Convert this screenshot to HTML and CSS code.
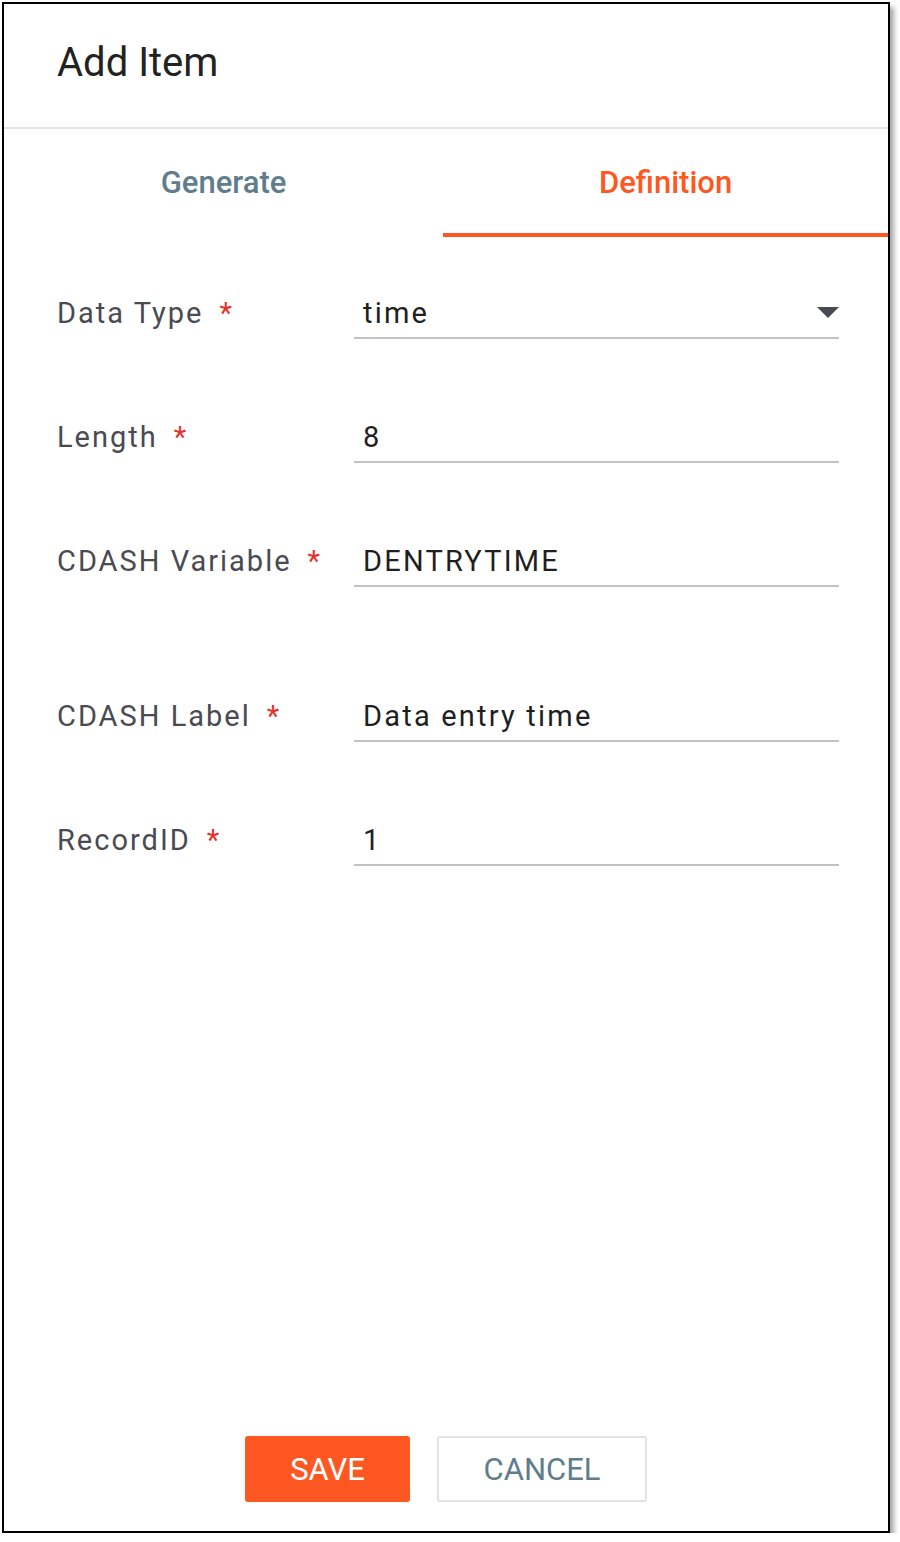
FILE: index.html
```html
<!DOCTYPE html>
<html lang="en">
<head>
<meta charset="utf-8">
<title>Add Item</title>
<link rel="stylesheet" href="styles.css">
</head>
<body>
<div class="panel">
  <header class="panel-header">
    <h1 class="panel-title">Add Item</h1>
  </header>
  <nav class="tabs">
    <div class="tab">Generate</div>
    <div class="tab tab-active">Definition</div>
  </nav>
  <form class="form">
    <div class="field">
      <label class="field-label">Data Type<span class="req">*</span></label>
      <div class="field-input field-select">
        <span class="field-value">time</span>
        <svg class="caret" width="22" height="11" viewBox="0 0 22 11"><path d="M0 0 L22 0 L11 11 Z" fill="#4a4a52"/></svg>
      </div>
    </div>
    <div class="field">
      <label class="field-label">Length<span class="req">*</span></label>
      <div class="field-input"><span class="field-value">8</span></div>
    </div>
    <div class="field field-spaced">
      <label class="field-label">CDASH Variable<span class="req">*</span></label>
      <div class="field-input"><span class="field-value">DENTRYTIME</span></div>
    </div>
    <div class="field">
      <label class="field-label">CDASH Label<span class="req">*</span></label>
      <div class="field-input"><span class="field-value">Data entry time</span></div>
    </div>
    <div class="field">
      <label class="field-label">RecordID<span class="req">*</span></label>
      <div class="field-input"><span class="field-value">1</span></div>
    </div>
  </form>
  <footer class="actions">
    <button class="btn btn-primary" type="button">SAVE</button>
    <button class="btn btn-secondary" type="button">CANCEL</button>
  </footer>
</div>
</body>
</html>
```

FILE: styles.css
```css
html, body {
  margin: 0;
  padding: 0;
  background: #ffffff;
}

body {
  font-family: Roboto, "Liberation Sans", Arial, sans-serif;
}

.panel {
  box-sizing: border-box;
  width: 888px;
  height: 1531px;
  margin: 2px 0 0 2px;
  border: 2px solid #000000;
  background: #ffffff;
  box-shadow: 4px 5px 5px rgba(0, 0, 0, 0.35);
  display: flex;
  flex-direction: column;
}

.panel-header {
  box-sizing: border-box;
  height: 125px;
  border-bottom: 2px solid #e2e2e2;
  padding: 0 0 6px 53px;
  display: flex;
  align-items: center;
}

.panel-title {
  margin: 0;
  font-size: 40px;
  font-weight: 400;
  color: #222222;
  line-height: 48px;
}

.tabs {
  display: flex;
  height: 108px;
}

.tab {
  flex: 1;
  display: flex;
  align-items: center;
  justify-content: center;
  font-size: 31px;
  font-weight: 500;
  color: #5f7d8c;
  border-bottom: 4px solid transparent;
  box-sizing: border-box;
  padding-top: 2px;
}

.tab-active {
  color: #ff5722;
  border-bottom-color: #ff5722;
  flex-basis: 0;
  flex-grow: 1.013;
}

.form {
  flex: 1;
  padding: 56px 49px 0 53px;
  display: flex;
  flex-direction: column;
  gap: 78px;
}

.field {
  display: flex;
  align-items: flex-end;
}

.field-spaced {
  margin-bottom: 31px;
}

.field-label {
  width: 297px;
  flex: none;
  font-size: 29px;
  line-height: 40px;
  padding-bottom: 6px;
  color: #4a4a52;
  letter-spacing: 2px;
}

.req {
  color: #e8302a;
  margin-left: 16px;
}

.field-input {
  flex: 1;
  display: flex;
  height: 44px;
  padding: 0 0 0 9px;
  border-bottom: 2px solid #c2c2c2;
  align-items: flex-end;
}

.field-value {
  font-size: 29px;
  line-height: 40px;
  padding-bottom: 4px;
  color: #1f1f1f;
  letter-spacing: 2.2px;
}

.field-select {
  justify-content: space-between;
}

.caret {
  align-self: center;
  margin-bottom: 6px;
}

.actions {
  display: flex;
  justify-content: center;
  gap: 27px;
  padding-bottom: 29px;
}

.btn {
  height: 66px;
  box-sizing: border-box;
  border-radius: 3px;
  font-family: Roboto, "Liberation Sans", Arial, sans-serif;
  font-size: 31px;
  font-weight: 400;
  cursor: pointer;
}

.btn-primary {
  width: 165px;
  background: #ff5722;
  color: #ffffff;
  border: none;
}

.btn-secondary {
  width: 210px;
  background: #ffffff;
  color: #5f7d8c;
  border: 2px solid #e2e2e2;
}
```
